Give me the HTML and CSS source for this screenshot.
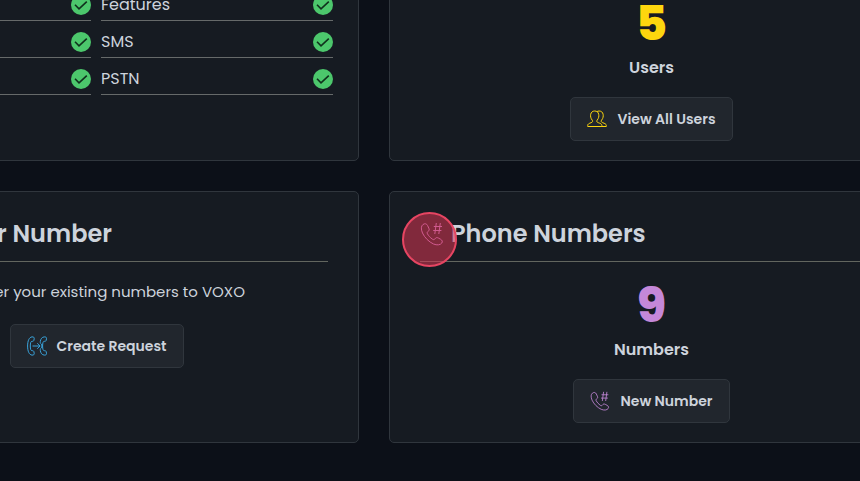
FILE: index.html
```
<!DOCTYPE html>
<html lang="en">
<head>
  <meta charset="utf-8">
  <title>VOXO Dashboard</title>
  <link rel="stylesheet" href="styles.css">
</head>
<body>
  <!-- shared icons -->
  <svg class="sprite" width="0" height="0" aria-hidden="true">
    <symbol id="check" viewBox="0 0 20 20">
      <circle cx="10" cy="10" r="10" fill="#4cc76c"/>
      <path d="M4 9.8l4 4L15.8 6.6" fill="none" stroke="#10311d" stroke-width="1.6"/>
    </symbol>
    <symbol id="phone" viewBox="0 0 24 24">
      <path d="M3 2.5C1 4 .8 7 2.5 11C4.5 15.5 9 20 13.5 22C17 23.5 20.5 23 21.8 21C22.8 19.5 22.3 18.3 20.5 17.2L18.3 16C16.8 15.2 15.8 15.6 15 16.8C14.4 17.8 13.4 17.9 12.3 17.1C10.2 15.6 8.6 13.8 7.5 11.9C6.8 10.7 7.2 9.9 8.2 9.3C9.3 8.6 9.5 7.6 8.8 6.2L7.6 3.6C6.6 1.6 5 1.2 3 2.5Z"/>
      <path d="M16.3 1L14.8 12M20.3 1L18.8 12M13.8 4.5H22M13.2 8.5H21.4"/>
    </symbol>
    <symbol id="users" viewBox="0 0 20 20">
      <path d="M.7 17.5v-1c0-1.500 1.300-2 3.400-2.800 1.700-.6 1.900-1.600 1-2.700C3.700 9.200 3.300 7.300 3.700 5.300 4.100 3.200 5.600 2 7.700 2s3.600 1.200 4 3.300c.4 2 0 3.900-1.400 5.700-.9 1.100-.7 2.100 1 2.700 2.100.8 3.600 1.300 3.600 2.800v1z"/>
      <path d="M10 2.600c.6-.4 1.300-.6 2.100-.6 2.100 0 3.600 1.200 4 3.300.4 2 0 3.900-1.400 5.700-.9 1.100-.7 2.100 1 2.700 2.100.8 3.600 1.300 3.600 2.800v1h-4.400"/>
    </symbol>
    <symbol id="transfer" viewBox="0 0 20 20">
      <path d="M5 .9C2.200 1.200.6 4.600.6 10s1.600 8.800 4.400 9.100c1.600.1 2.400-.5 2.200-1.800l-.3-1.500c-.2-.9-.7-1.200-1.700-1.100-1.400.1-1.900-1.600-1.900-4.700s.5-4.800 1.900-4.700c1 .1 1.500-.2 1.700-1.100l.3-1.500C7.400 1.400 6.600.8 5 .9z"/>
      <path d="M17.300.9c-2.300.2-3.600 1.900-4 4.600-.2 1.300.2 1.900 1 2.600.8.700.8 3.100 0 3.800-.8.700-1.200 1.300-1 2.600.4 2.700 1.700 4.400 4 4.600 1.600.1 2.400-.5 2.200-1.800l-.3-1.500c-.2-.9-.7-1.200-1.700-1.100-1.400.1-1.900-1.600-1.900-4.700s.5-4.800 1.900-4.700c1 .1 1.500-.2 1.700-1.100l.3-1.500c.2-1.300-.6-1.900-2.200-1.800z"/>
      <path d="M5.500 10H13M10.300 7.200l2.800 2.800-2.800 2.800"/>
    </symbol>
  </svg>

  <main class="dashboard">
    <section class="card card-list">
      <ul class="features">
        <li><svg class="check" role="img" aria-label="Enabled"><use href="#check"/></svg></li>
        <li>Features <svg class="check" role="img" aria-label="Enabled"><use href="#check"/></svg></li>
        <li><svg class="check" role="img" aria-label="Enabled"><use href="#check"/></svg></li>
        <li>SMS <svg class="check" role="img" aria-label="Enabled"><use href="#check"/></svg></li>
        <li><svg class="check" role="img" aria-label="Enabled"><use href="#check"/></svg></li>
        <li>PSTN <svg class="check" role="img" aria-label="Enabled"><use href="#check"/></svg></li>
      </ul>
    </section>

    <section class="card">
      <div class="count yellow">5</div>
      <div class="label">Users</div>
      <button type="button" class="btn"><svg class="icon yellow"><use href="#users"/></svg>View All Users</button>
    </section>

    <section class="card">
      <h2 class="title"><span class="title-icon"><svg class="icon blue"><use href="#transfer"/></svg></span>Port Your Number</h2>
      <p class="text">Transfer your existing numbers to VOXO</p>
      <button type="button" class="btn"><svg class="icon blue"><use href="#transfer"/></svg>Create Request</button>
    </section>

    <section class="card">
      <h2 class="title">
        <span class="title-icon"><svg class="icon purple"><use href="#phone"/></svg><span class="marker"></span></span>Phone Numbers
      </h2>
      <div class="count purple">9</div>
      <div class="label">Numbers</div>
      <button type="button" class="btn"><svg class="icon purple"><use href="#phone"/></svg>New Number</button>
    </section>
  </main>
</body>
</html>
```
FILE: styles.css
```
* {
  box-sizing: border-box;
}

body {
  margin: 0;
  overflow: hidden;
  background-color: #0c1018;
  color: #cdd3dc;
  font-family: Poppins, Inter, "Open Sans", sans-serif;
  font-size: 16px;
  line-height: 24px;
}

.sprite {
  position: absolute;
}

/* the grid runs past the window edges */
.dashboard {
  display: grid;
  grid-template-columns: 1fr 1fr;
  gap: 30px;
  margin: -32px -54px 0 -166px;
}

.card {
  display: flex;
  flex-direction: column;
  align-items: center;
  padding: 24px 30px 19px;
  background-color: #161b22;
  border: 1px solid #30363d;
  border-radius: 5px;
}

.card-list {
  align-items: stretch;
  padding: 15px 25px 19px 24px;
}

.features {
  display: grid;
  grid-template-columns: 1fr 1fr;
  column-gap: 10px;
  margin: 0;
  padding: 0;
  list-style: none;
}

.features li {
  display: flex;
  align-items: center;
  height: 37px;
  padding-top: 6px;
  border-bottom: 1px solid #666a6a;
}

.check {
  width: 20px;
  height: 20px;
  margin-left: auto;
}

.title {
  display: flex;
  align-items: center;
  align-self: stretch;
  gap: 7px;
  margin: 0 0 13px;
  padding-bottom: 10px;
  border-bottom: 1px solid #62665f;
  font-size: 24px;
  font-weight: 600;
  line-height: 35px;
}

.title-icon {
  display: flex;
  position: relative;
}

/* click marker over the icon */
.marker {
  position: absolute;
  top: -10px;
  left: -18px;
  width: 55px;
  height: 55px;
  background-color: rgba(219, 52, 82, 0.55);
  border: 2px solid #e64562;
  border-radius: 50%;
}

.icon {
  width: 20px;
  height: 20px;
  fill: none;
  stroke: currentColor;
  stroke-width: 1;
}

.title-icon .icon {
  width: 24px;
  height: 24px;
}

.count {
  margin-top: 1px;
  font-size: 48px;
  font-weight: 800;
  line-height: 60px;
}

.label {
  margin: 2px 0 17px;
  font-weight: 600;
}

.text {
  margin: 5px 0 20px;
  font-size: 15px;
}

.btn {
  display: flex;
  align-items: center;
  gap: 10px;
  height: 44px;
  padding: 0 16px;
  background-color: #21262d;
  border: 1px solid #30363d;
  border-radius: 5px;
  color: #cdd3dc;
  font-family: inherit;
  font-size: 14px;
  font-weight: 600;
  cursor: pointer;
}

.yellow {
  color: #fdd60e;
}

.blue {
  color: #3aa5dd;
}

.purple {
  color: #c488d9;
}
```
